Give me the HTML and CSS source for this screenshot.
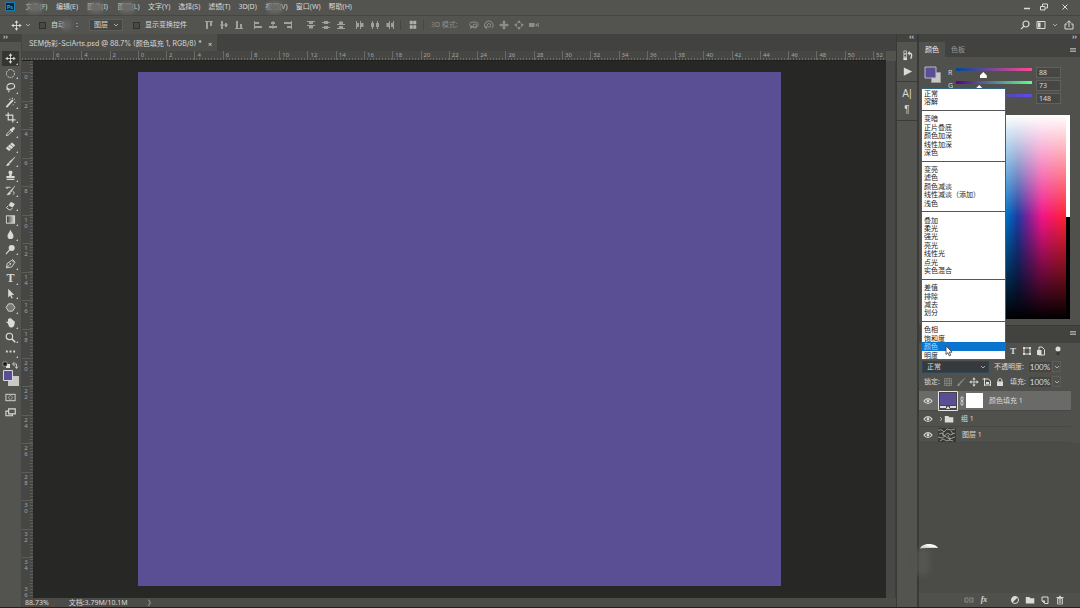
FILE: index.html
```html
<!DOCTYPE html>
<html lang="zh-CN">
<head>
<meta charset="utf-8">
<title>SEM伪彩-SciArts.psd</title>
<link rel="stylesheet" href="styles.css">
</head>
<body>
<svg class="defs" aria-hidden="true">
  <symbol id="move" viewBox="0 0 12 12"><path d="M6 2v8M2 6h8" stroke="currentColor" fill="none"/><path d="M6 .3 8 3H4zM6 11.7 8 9H4zM.3 6 3 4v4zM11.7 6 9 4v4z" fill="currentColor"/></symbol>
  <symbol id="marquee" viewBox="0 0 12 12"><circle cx="6" cy="6" r="4.4" fill="none" stroke="currentColor" stroke-dasharray="2 .9"/></symbol>
  <symbol id="lasso" viewBox="0 0 12 12"><ellipse cx="6.3" cy="4.8" rx="4.3" ry="3" fill="none" stroke="currentColor" stroke-width="1.2" transform="rotate(-12 6 5)"/><path d="M3 6.5c-1.7 1-.9 2.2.4 1.7 1.300-.7 1.500 1.500.3 3" fill="none" stroke="currentColor" stroke-width="1.100"/></symbol>
  <symbol id="wand" viewBox="0 0 12 12"><path d="M1.500 11 7.500 4.500" stroke="currentColor" stroke-width="2"/><path d="M4.500 2.500h1.500M8 .8v1.700M10.800 2 9.500 3.200M10 5.800h1.500M9 8v1" stroke="currentColor"/><path d="m7 5 1.500-1.600" stroke="currentColor" stroke-width="2"/></symbol>
  <symbol id="crop" viewBox="0 0 12 12"><path d="M3.500 .5v8h8M.5 3.500h8v8" fill="none" stroke="currentColor" stroke-width="1.300"/></symbol>
  <symbol id="dropper" viewBox="0 0 12 12"><path d="M1.500 10.500 2 8.500l4-4 1.500 1.500-4 4z" fill="none" stroke="currentColor"/><path d="m5.200 3.800 3 3 .8-.9-.5-.7 2-1.900c1-1.200-.7-3-2-2l-1.900 2-.6-.4z" fill="currentColor"/></symbol>
  <symbol id="heal" viewBox="0 0 12 12"><path d="M.8 8 7.500 1.500l3.700 3L4.500 11z" fill="currentColor"/><path d="m3 6 3.600 3M5.500 3.600l3.600 3" stroke="#535350" stroke-width=".7"/></symbol>
  <symbol id="brush" viewBox="0 0 12 12"><path d="M11 1 5.500 8 4.200 6.900z" fill="currentColor" stroke="currentColor" stroke-width=".5"/><path d="M3.800 7.300 5.300 8.700C4.500 10.500 3 11 1 10.800c1.300-.8 1-2.800 2.800-3.500z" fill="currentColor"/></symbol>
  <symbol id="stamp" viewBox="0 0 12 12"><path d="M6 .8c2.800 0 2.500 2.300 1.400 3.700-.5.900-.1 1.700.3 2H10.500v2.200h-9V6.500h2.800c.4-.3.800-1.100.3-2C3.500 3.100 3.200.8 6 .8zM1.800 9.600h8.400v1.300H1.800z" fill="currentColor"/></symbol>
  <symbol id="histbrush" viewBox="0 0 12 12"><path d="M10.800 1 6.600 8 5.300 7zM5 7.500 6.300 8.700C5.500 10.600 4 11 2 10.800c1.300-.8 1-2.600 3-3.300z" fill="currentColor" stroke="currentColor" stroke-width=".4"/><path d="M1 2.500h5M1 2.500 3 4.500M8.500 7c1.500.3 2 2 .4 3.500" fill="none" stroke="currentColor"/></symbol>
  <symbol id="eraser" viewBox="0 0 12 12"><path d="m6.500 2 4.300 2.300-2.500 4-4.500-2.300z" fill="currentColor"/><path d="m3.300 6.500-1.800 2 3.200 2.200h1.800l1.500-2" fill="none" stroke="currentColor"/></symbol>
  <symbol id="gradient" viewBox="0 0 12 12"><linearGradient id="gg"><stop stop-color="#333"/><stop offset="1" stop-color="#ddd"/></linearGradient><rect x="1.500" y="2" width="9" height="8" fill="url(#gg)" stroke="currentColor"/></symbol>
  <symbol id="drop" viewBox="0 0 12 12"><path d="M6 .8C7 3.500 9.300 5.500 9.300 7.800c0 4.300-6.600 4.300-6.600 0C2.700 5.500 5 3.500 6 .8z" fill="currentColor"/></symbol>
  <symbol id="dodge" viewBox="0 0 12 12"><circle cx="7.300" cy="4.300" r="3.300" fill="currentColor"/><path d="m5 6.500-4 4.500" stroke="currentColor" stroke-width="1.200"/></symbol>
  <symbol id="pen" viewBox="0 0 12 12"><path d="m1.500 10.800 1-5L7.500 2.500l2.800 2.800-3 4.500z" fill="none" stroke="currentColor"/><path d="m1.500 10.800 3.500-3.500M7.800 1.200l3.500 3.500" stroke="currentColor"/><circle cx="5.800" cy="6.400" r="1" fill="currentColor"/></symbol>
  <symbol id="pointer" viewBox="0 0 12 12"><path d="M3.500 .8v9.500l2.200-2.100 1.500 3.200 1.300-.6L7 7.700h3z" fill="currentColor"/></symbol>
  <symbol id="shape" viewBox="0 0 12 12"><path d="M3.800 2h4.400l2.600 4-2.600 4H3.800L1.200 6z" fill="#777" stroke="currentColor"/></symbol>
  <symbol id="hand" viewBox="0 0 12 12"><path d="M3.200 7 1 5.500c.4-1 1.400-.7 2.200.3V2.500c.2-.8 1.200-.8 1.400 0V1.300c.3-.8 1.300-.8 1.500 0v1c.3-.9 1.500-.8 1.600 0v1.200c.4-.8 1.400-.6 1.500.2v.9c.6-.5 1.500-.2 1.500.5 0 3-.8 6.300-4 6.300C4.500 11.400 4 9.500 3.200 7z" fill="currentColor"/></symbol>
  <symbol id="zoom" viewBox="0 0 12 12"><circle cx="4.800" cy="4.800" r="3.500" fill="none" stroke="currentColor" stroke-width="1.200"/><path d="m7.500 7.500 3.700 3.700" stroke="currentColor" stroke-width="1.700"/></symbol>
  <symbol id="dots" viewBox="0 0 12 12"><path d="M1 5h2v2H1zM5 5h2v2H5zM9 5h2v2H9z" fill="currentColor"/></symbol>
  <symbol id="mask" viewBox="0 0 12 12"><rect x="1" y="2.500" width="10" height="7" fill="none" stroke="currentColor"/><circle cx="6" cy="6" r="2" fill="none" stroke="currentColor" stroke-dasharray="1 .6"/></symbol>
  <symbol id="screens" viewBox="0 0 12 12"><path d="M4 2h7.200v5.500H4z" fill="none" stroke="currentColor" stroke-width="1.200"/><path d="M4 4.500H1v5h7v-2" fill="none" stroke="currentColor" stroke-width="1.200"/></symbol>
  <symbol id="chev" viewBox="0 0 6 6"><path d="m1 2 2 2 2-2" fill="none" stroke="currentColor" stroke-width=".9"/></symbol>
  <symbol id="a-top" viewBox="0 0 10 10"><path d="M1 1.500h8" stroke="currentColor"/><path d="M2 2h2v7H2zM6 2h2v4H6z" fill="currentColor"/></symbol>
  <symbol id="a-mid" viewBox="0 0 10 10"><path d="M1 5h8" stroke="currentColor"/><path d="M2 1h2v8H2zM6 3h2v4H6z" fill="currentColor"/></symbol>
  <symbol id="d-top" viewBox="0 0 10 10"><path d="M1 1.500h8M1 5.500h8" stroke="currentColor"/><path d="M3 2h4v2H3zM3 6h4v2.500H3z" fill="currentColor"/></symbol>
  <symbol id="d-mid" viewBox="0 0 10 10"><path d="M1 2.500h8M1 7.500h8" stroke="currentColor"/><path d="M3 1h4v3H3zM3 6h4v3H3z" fill="currentColor"/></symbol>
  <symbol id="arrange" viewBox="0 0 10 10"><path d="M2 1h2.500v3H2zM5.500 1H8v3H5.500zM2 5.500h2.500v3H2zM5.500 5.500H8v3H5.500z" fill="currentColor" stroke="currentColor" stroke-width=".5"/></symbol>
  <symbol id="orbit" viewBox="0 0 10 10"><ellipse cx="5" cy="4.500" rx="4.300" ry="2.500" fill="none" stroke="currentColor"/><circle cx="6" cy="6" r="2" fill="none" stroke="currentColor"/><path d="m1 9 1-4 2 2.500z" fill="currentColor"/></symbol>
  <symbol id="roll" viewBox="0 0 10 10"><path d="M1.500 8A4.300 4.300 0 1 1 8 8.200" fill="none" stroke="currentColor"/><circle cx="5" cy="5.300" r="1.800" fill="none" stroke="currentColor"/><path d="M0 6.500h3v3z" fill="currentColor"/></symbol>
  <symbol id="pan" viewBox="0 0 10 10"><path d="m5 0 2 2.500H6V4h1.500V3L10 5 7.500 7V6H6v1.500h1L5 10 3 7.500h1V6H2.500v1L0 5l2.500-2v1H4V2.500H3z" fill="currentColor"/></symbol>
  <symbol id="slide" viewBox="0 0 10 10"><path d="m5 0 2 3H3zM5 10 3 7h4zM0 5l3-2v4zM10 5 7 7V3z" fill="currentColor"/></symbol>
  <symbol id="cam" viewBox="0 0 10 10"><path d="M0 3h5.500v4H0zM6 5l2.500-2v4z" fill="currentColor"/><path d="M9.500 3v4" stroke="currentColor" stroke-width=".7"/></symbol>
  <symbol id="menu" viewBox="0 0 6 6"><path d="M0 1.500h6M0 3h6M0 4.500h6" stroke="currentColor" stroke-width=".8"/></symbol>
  <symbol id="eye" viewBox="0 0 10 10"><path d="M1 5c2-3.300 6-3.300 8 0-2 3.300-6 3.300-8 0z" fill="none" stroke="currentColor" stroke-width="1.200"/><circle cx="5" cy="5" r="1.400" fill="currentColor"/></symbol>
  <symbol id="folder" viewBox="0 0 10 10"><path d="M.8 2h3.500l1 1.200h4V8.500H.8z" fill="currentColor"/></symbol>
  <symbol id="frame" viewBox="0 0 10 10"><rect x="2" y="2" width="6" height="6" fill="none" stroke="currentColor"/><path d="M1 1h2v2H1zM7 1h2v2H7zM1 7h2v2H1zM7 7h2v2H7z" fill="currentColor"/></symbol>
  <symbol id="smart" viewBox="0 0 10 10"><path d="M3 1h3l2.500 2.500V9H3z" fill="none" stroke="currentColor"/><path d="M1 4h4.500v5H1z" fill="currentColor"/></symbol>
  <symbol id="checker" viewBox="0 0 10 10"><path d="M1.500 1.500h7v7h-7zM4 1v8M6.500 1v8M1 4h8M1 6.500h8" fill="none" stroke="currentColor" stroke-width=".7"/></symbol>
  <symbol id="artboard" viewBox="0 0 10 10"><path d="M2.500 1v8M.5 2h6l2 2v5M2 8h7" fill="none" stroke="currentColor"/><path d="M4 5h3v2H4z" fill="currentColor"/></symbol>
  <symbol id="lock" viewBox="0 0 10 10"><path d="M2 4.500h6V9H2z" fill="currentColor"/><path d="M3.200 5V3c0-2 3.600-2 3.600 0v2" fill="none" stroke="currentColor"/></symbol>
  <symbol id="link" viewBox="0 0 10 10"><path d="M4.500 3H1v4h3.500M5.500 3H9v4H5.500M3 5h4" fill="none" stroke="currentColor"/></symbol>
  <symbol id="adjust" viewBox="0 0 10 10"><circle cx="5" cy="5" r="3.500" fill="none" stroke="currentColor"/><path d="M7.500 2.500a3.500 3.500 0 0 0-5 5z" fill="currentColor"/></symbol>
  <symbol id="newlayer" viewBox="0 0 10 10"><path d="M2 2h6v6.500H5L2 6z" fill="none" stroke="currentColor"/><path d="M2 5.500h3v3z" fill="currentColor"/></symbol>
  <symbol id="trash" viewBox="0 0 10 10"><path d="M1.500 2.500h7M4 1.300h2" stroke="currentColor"/><path d="M2.500 3.500h5V9h-5zM4.200 4v4M5.800 4v4" fill="none" stroke="currentColor" stroke-width=".8"/></symbol>
</svg>

<div class="app">
  <header class="menubar">
    <svg class="logo" viewBox="0 0 10 9"><rect x=".5" y=".5" width="9" height="8" fill="#06263c" stroke="#1a7db2"/><text x="5" y="6.500" class="logo-text">Ps</text></svg>
    <nav class="menus">
      <button class="smudged">文件(F)</button><button>编辑(E)</button><button class="smudged">图像(I)</button><button class="smudged">图层(L)</button><button>文字(Y)</button><button>选择(S)</button><button>滤镜(T)</button><button>3D(D)</button><button class="smudged">视图(V)</button><button>窗口(W)</button><button>帮助(H)</button>
    </nav>
    <div class="window-buttons">
      <button aria-label="最小化"><svg viewBox="0 0 10 10"><path d="M2 6.500h6" stroke="currentColor" stroke-width="1.500"/></svg></button>
      <button aria-label="还原"><svg viewBox="0 0 10 10"><path d="M1.500 4.500h4.500V8H1.500zM3.500 4V2h5v4H6.500" fill="none" stroke="currentColor"/></svg></button>
      <button class="close" aria-label="关闭"><svg viewBox="0 0 10 10"><path d="m2.500 2.500 5 5M7.500 2.500l-5 5" stroke="currentColor"/></svg></button>
    </div>
  </header>

  <div class="options">
    <svg class="opt-tool"><use href="#move"/></svg>
    <svg class="chev"><use href="#chev"/></svg>
    <label class="check auto"><input type="checkbox"><span>自动</span><i></i><span>:</span></label>
    <span class="drop"><select aria-label="自动选择"><option>图层</option></select><svg class="chev"><use href="#chev"/></svg></span>
    <label class="check"><input type="checkbox"><span>显示变换控件</span></label>
    <div class="groups">
      <div class="group"><svg><use href="#a-top"/></svg><svg><use href="#a-mid"/></svg><svg class="flip"><use href="#a-top"/></svg></div>
      <div class="group"><svg class="ccw"><use href="#a-top"/></svg><svg class="ccw"><use href="#a-mid"/></svg><svg class="cw"><use href="#a-top"/></svg></div>
      <div class="group wide"><svg><use href="#d-top"/></svg><svg><use href="#d-mid"/></svg><svg class="flip"><use href="#d-top"/></svg></div>
      <div class="group"><svg class="ccw"><use href="#d-top"/></svg><svg class="ccw"><use href="#d-mid"/></svg><svg class="cw"><use href="#d-top"/></svg></div>
    </div>
    <div class="arrange"><svg><use href="#arrange"/></svg></div>
    <div class="mode"><span>3D 模式:</span><svg><use href="#orbit"/></svg><svg><use href="#roll"/></svg><svg><use href="#pan"/></svg><svg><use href="#slide"/></svg><svg><use href="#cam"/></svg></div>
    <div class="opt-right">
      <svg viewBox="0 0 10 10"><circle cx="6" cy="4" r="3" fill="none" stroke="currentColor" stroke-width="1.200"/><path d="M4 6.200 1 9.200" stroke="currentColor" stroke-width="1.200"/></svg>
      <svg viewBox="0 0 10 10"><path d="M1 1.500h8v7H1z" fill="none" stroke="currentColor"/><path d="M2 2.500h2.500v5H2z" fill="currentColor"/></svg>
      <svg class="chev"><use href="#chev"/></svg>
      <svg viewBox="0 0 10 10"><path d="M3 4H1v5h8V4H7M5 7V1M3 2.800 5 .8l2 2" fill="none" stroke="currentColor"/></svg>
    </div>
  </div>

  <div class="workspace">
    <aside class="toolbar">
      <div class="collapse">››</div>
      <div class="tools">
        <button class="on" aria-label="移动"><svg><use href="#move"/></svg></button>
        <button aria-label="选框"><svg><use href="#marquee"/></svg></button>
        <button aria-label="套索"><svg><use href="#lasso"/></svg></button>
        <button aria-label="快速选择"><svg><use href="#wand"/></svg></button>
        <button aria-label="裁剪"><svg><use href="#crop"/></svg></button>
        <button aria-label="吸管"><svg><use href="#dropper"/></svg></button>
        <button aria-label="修复"><svg><use href="#heal"/></svg></button>
        <button aria-label="画笔"><svg><use href="#brush"/></svg></button>
        <button aria-label="图章"><svg><use href="#stamp"/></svg></button>
        <button aria-label="历史画笔"><svg><use href="#histbrush"/></svg></button>
        <button aria-label="橡皮擦"><svg><use href="#eraser"/></svg></button>
        <button aria-label="渐变"><svg><use href="#gradient"/></svg></button>
        <button aria-label="模糊"><svg><use href="#drop"/></svg></button>
        <button aria-label="减淡"><svg><use href="#dodge"/></svg></button>
        <button aria-label="钢笔"><svg><use href="#pen"/></svg></button>
        <button class="type">T</button>
        <button aria-label="路径选择"><svg><use href="#pointer"/></svg></button>
        <button aria-label="形状"><svg><use href="#shape"/></svg></button>
        <button aria-label="抓手"><svg><use href="#hand"/></svg></button>
        <button aria-label="缩放"><svg><use href="#zoom"/></svg></button>
        <button aria-label="更多"><svg><use href="#dots"/></svg></button>
      </div>
      <svg class="fgbg" viewBox="0 0 20 28"><path d="M6 5h4v4H6z" fill="#ddd"/><path d="M3 3h4v4H3z" fill="#111" stroke="#bbb" stroke-width=".6"/><path d="M13 5h3.500v4M14.500 3 12.500 5l2 2M15 7.500l1.500 2 1.500-2" fill="none" stroke="#ddd" stroke-width=".8"/><path d="M8 17h11v10H8z" fill="#c9c9c4"/><path d="M3.500 11.500h9v10h-9z" fill="#5a4e94" stroke="#d6d6df"/></svg>
      <button class="mode-button" aria-label="快速蒙版"><svg><use href="#mask"/></svg></button>
      <button class="mode-button" aria-label="屏幕模式"><svg><use href="#screens"/></svg></button>
    </aside>

    <main class="document">
      <div class="tabs"><div class="tab"><span>SEM伪彩-SciArts.psd @ 88.7% (颜色填充 1, RGB/8) *</span><button aria-label="关闭文档">×</button></div></div>
      <div class="ruler-h"><span>6</span><span>4</span><span>2</span><span>0</span><span>2</span><span>4</span><span>6</span><span>8</span><span>10</span><span>12</span><span>14</span><span>16</span><span>18</span><span>20</span><span>22</span><span>24</span><span>26</span><span>28</span><span>30</span><span>32</span><span>34</span><span>36</span><span>38</span><span>40</span><span>42</span><span>44</span><span>46</span><span>48</span><span>50</span><span>52</span></div>
      <div class="view">
        <div class="ruler-v"><span>0</span><span>2</span><span>4</span><span>6</span><span>8</span><span>1<br>0</span><span>1<br>2</span><span>1<br>4</span><span>1<br>6</span><span>1<br>8</span><span>2<br>0</span><span>2<br>2</span><span>2<br>4</span><span>2<br>6</span><span>2<br>8</span><span>3<br>0</span><span>3<br>2</span><span>3<br>4</span><span>3<br>6</span></div>
        <div class="pasteboard"><div class="canvas"></div></div>
        <div class="scroll"></div>
      </div>
      <footer class="status"><span>88.73%</span><span>文档:3.79M/10.1M</span><span>〉</span></footer>
    </main>

    <aside class="dock">
      <div class="collapse">‹‹</div>
      <div class="dock-icons">
        <button aria-label="历史记录"><svg viewBox="0 0 12 12"><path d="M2 1h3v3H2zM2 4.500h3v3H2z" fill="none" stroke="currentColor" stroke-width=".8"/><path d="M1.500 8h4v3h-4z" fill="currentColor"/><path d="M7.500 3.500h1c2.500 0 2.500 3 1 6" fill="none" stroke="currentColor" stroke-width="1.500"/><path d="M6 3.500 8.500 1v5z" fill="currentColor"/></svg></button>
        <button aria-label="动作"><svg viewBox="0 0 12 12"><path d="M2 1.500 11 6l-9 4.500z" fill="currentColor"/></svg></button>
      </div>
      <div class="dock-icons second"><button>A|</button><button>¶</button></div>
    </aside>

    <aside class="panels">
      <div class="collapse right">››</div>
      <div class="panel-tabs"><button class="on">颜色</button><button>色板</button><svg class="burger"><use href="#menu"/></svg></div>
      <section class="color-panel">
        <div class="color-top">
          <svg class="swatches" viewBox="0 0 18 18"><path d="M7.500 6.500h9v10h-9z" fill="#c9c9c4" stroke="#999"/><path d="M1 1h11v11H1z" fill="#5a4e94" stroke="#b9b9cf"/></svg>
          <div class="channels">
            <label for="r">R</label><input class="red" id="r" type="range" max="255" value="88"><input class="num" aria-label="R 值" value="88">
            <label for="g">G</label><input class="green" id="g" type="range" max="255" value="73"><input class="num" aria-label="G 值" value="73">
            <label for="b">B</label><input class="blue" id="b" type="range" max="255" value="148"><input class="num" aria-label="B 值" value="148">
          </div>
        </div>
        <div class="spectrum"><div class="hues"></div><div class="bw"></div></div>
      </section>

      <section class="layers-panel">
        <div class="panel-tabs tall"><svg class="burger"><use href="#menu"/></svg></div>
        <div class="row filter"><button class="type">T</button><svg><use href="#frame"/></svg><svg><use href="#smart"/></svg><svg class="toggle" viewBox="0 0 10 10"><path d="M3.500 3h3v6h-3z" fill="#3a3a38"/><circle cx="5" cy="3" r="2.500" fill="currentColor"/></svg></div>
        <div class="row blend">
          <span class="drop"><select aria-label="混合模式"><option>正常</option></select><svg class="chev"><use href="#chev"/></svg></span>
          <label for="opacity">不透明度:</label><input class="num" id="opacity" value="100%"><button class="step" aria-label="不透明度滑块"><svg class="chev"><use href="#chev"/></svg></button>
          <ul class="modes" role="listbox" aria-label="混合模式">
            <li>正常</li><li>溶解</li><li class="sep"></li>
            <li>变暗</li><li>正片叠底</li><li>颜色加深</li><li>线性加深</li><li>深色</li><li class="sep"></li>
            <li>变亮</li><li>滤色</li><li>颜色减淡</li><li>线性减淡（添加）</li><li>浅色</li><li class="sep"></li>
            <li>叠加</li><li>柔光</li><li>强光</li><li>亮光</li><li>线性光</li><li>点光</li><li>实色混合</li><li class="sep"></li>
            <li>差值</li><li>排除</li><li>减去</li><li>划分</li><li class="sep"></li>
            <li>色相</li><li>饱和度</li><li class="on">颜色<svg class="cursor" viewBox="0 0 8 12"><path d="M1 .8v8.700l2-1.800 1.300 3.200 1.400-.6L4.400 7.200H7z" fill="#fff" stroke="#333" stroke-width=".8"/></svg></li><li>明度</li>
          </ul>
        </div>
        <div class="row locks">
          <span>锁定:</span>
          <div class="lock-icons"><svg class="dim"><use href="#checker"/></svg><svg class="dim"><use href="#brush"/></svg><svg><use href="#move"/></svg><svg><use href="#artboard"/></svg><svg><use href="#lock"/></svg></div>
          <label for="fill">填充:</label><input class="num" id="fill" value="100%"><button class="step" aria-label="填充滑块"><svg class="chev"><use href="#chev"/></svg></button>
        </div>
        <div class="layers">
          <div class="layer big on"><svg class="eye"><use href="#eye"/></svg>
            <svg class="thumb-fill" viewBox="0 0 20 20"><path d="M.5 .5h19v19H.5z" fill="#444" stroke="#e4e4e4"/><path d="M2 2h16v12H2z" fill="#5a4e94"/><path d="M2 16h6M12 16h6" stroke="#ddd" stroke-width="2"/><path d="M10 15l2 3H8z" fill="#ddd"/></svg>
            <svg class="chain" viewBox="0 0 4 10"><path d="M1 1h2v3.500H1zM1 5.500h2V9H1z" fill="none" stroke="currentColor" stroke-width=".8"/></svg>
            <div class="mask"></div><span>颜色填充 1</span></div>
          <div class="layer"><svg class="eye"><use href="#eye"/></svg><svg class="chev side"><use href="#chev"/></svg><svg class="folder"><use href="#folder"/></svg><span>组 1</span></div>
          <div class="layer"><svg class="eye"><use href="#eye"/></svg>
            <svg class="thumb-image" viewBox="0 0 18 14"><path fill="#383836" d="M0 0h18v14H0z"/><path d="M0 2h4l2 2 3-3 4 1 4-1M1 6l3-1 2 3 4-3 2 2 5-2M0 9l4 1 3-2 4 3 6-2M2 13l3-2 4 2 3-1 3 1M13 3l2 3M5 4v4M10 7l2 5" fill="none" stroke="#b4b4b0" stroke-width=".8"/></svg>
            <span>图层 1</span></div>
        </div>
        <div class="empty"><svg class="watermark" viewBox="0 0 18 6"><path d="M0 5.500C2-.5 15-.5 18 5 12 4.500 6 5 0 5.500z" fill="#fff"/></svg><i class="watermark-shade"></i></div>
        <div class="layer-actions"><button class="dim" aria-label="链接"><svg><use href="#link"/></svg></button><button class="fx">fx</button><button class="gap" aria-label="调整"><svg><use href="#adjust"/></svg></button><button aria-label="新建组"><svg><use href="#folder"/></svg></button><button aria-label="新建图层"><svg><use href="#newlayer"/></svg></button><button aria-label="删除"><svg><use href="#trash"/></svg></button></div>
      </section>
    </aside>
  </div>
</div>
</body>
</html>
```
FILE: styles.css
```css
:root {
  --bar: #535350;
  --panel: #50504d;
  --dark: #424240;
  --line: #3b3b39;
  --text: #dadad8;
  --dim: #8d8d8a;
  --purple: #5a4e94;
}
* { box-sizing: border-box; }
body {
  margin: 0;
  background: var(--bar);
  color: var(--text);
  font: 7px/10px "Noto Sans", "Noto Sans CJK SC", sans-serif;
}
button, input, select {
  margin: 0;
  padding: 0;
  border: 0;
  background: none;
  color: inherit;
  font: inherit;
  appearance: none;
}
button { display: grid; place-items: center; white-space: nowrap; }
svg { display: block; flex: none; width: 10px; height: 10px; }
.defs { position: absolute; width: 0; height: 0; }
.chev { width: 6px; height: 6px; color: #b5b5b2; }
.app { display: flex; flex-direction: column; height: 100vh; min-height: 600px; overflow: hidden; border-bottom: 1px solid #20201f; }

/* Menu bar */
.menubar { display: flex; align-items: center; height: 15px; padding: 0 10px 2px 5px; }
.logo { height: 9px; }
.logo-text { font: bold 5px "Liberation Sans", sans-serif; fill: #35aee8; text-anchor: middle; }
.menus { display: flex; gap: 8px; margin-left: 10px; }
.smudged { position: relative; min-width: 23px; }
.smudged::after { content: ""; position: absolute; left: 3px; right: 6px; top: 0; height: 11px; border-radius: 4px; background: #696967; filter: blur(2px); }
.window-buttons { display: flex; gap: 7px; margin-left: auto; }
.window-buttons .close { margin-left: 4px; }

/* Options bar */
.options { display: flex; align-items: center; height: 19px; padding: 0 6px 0 11px; border-top: 1px solid #454543; }
.opt-tool { width: 11px; height: 11px; margin-right: 3px; }
.check { display: flex; align-items: center; gap: 5px; margin-left: 11px; white-space: nowrap; }
.check input { width: 7px; height: 7px; border: 1px solid #30302f; background: #484846; }
.options > .chev + .check { margin-left: 8px; }
.options > .drop + .check { gap: 5px; margin-left: 10px; }
.auto i { width: 9px; height: 10px; margin-left: -8px; background: #656563; filter: blur(2px); }
.drop { display: flex; align-items: center; width: 34px; height: 12px; padding-right: 3px; border: 1px solid #5e5e5b; background: #464644; }
.drop select { flex: 1; min-width: 0; padding-left: 4px; }
.options > .drop { margin-left: 11px; }
.groups { display: flex; gap: 9px; margin-left: 17px; color: #a0a09d; }
.group, .mode { display: flex; align-items: center; gap: 5px; }
.group.wide { margin-left: 4px; }
.flip { transform: scaleY(-1); }
.ccw { transform: rotate(-90deg); }
.cw { transform: rotate(90deg); }
.arrange { margin-left: 5px; padding: 0 5px 0 7px; border: solid #464644; border-width: 0 1px; color: #b0b0ad; }
.mode { margin-left: 7px; color: var(--dim); white-space: nowrap; }
.mode span { margin-right: 6px; }
.opt-right { display: flex; align-items: center; gap: 6px; margin-left: auto; }

/* Workspace columns */
.workspace { display: grid; grid-template-columns: 22px minmax(0, 1fr) 23px 161px; flex: 1; min-height: 0; }
.collapse { height: 8px; padding-left: 3px; background: var(--dark); color: #c4c4c2; font: bold 7px/6px "Noto Sans", sans-serif; }
.toolbar { border-right: 1px solid #454543; }
.tools { display: flex; flex-direction: column; height: 308px; margin-top: 9px; }
.tools button { position: relative; flex: 1; }
.tools .on { margin: 0 2px; background: #353533; }
.tools svg, .mode-button svg { width: 11px; height: 11px; }
.tools button::after { content: ""; position: absolute; right: 3px; bottom: 1px; border: 1px solid; border-color: transparent #c8c8c6 #c8c8c6 transparent; }
.tools .on::after { right: 1px; }
.type { font: bold 12px/12px "Liberation Serif", serif; }
.fgbg { width: 20px; height: 28px; }
.mode-button { width: 21px; height: 15px; }
.fgbg + .mode-button { margin-top: 3px; }

/* Document window */
.document { display: flex; flex-direction: column; min-width: 0; }
.tabs { display: flex; height: 17px; background: var(--dark); }
.tab { display: flex; align-items: center; gap: 6px; padding: 2px 5px 0 7px; background: #4e4e4b; font: 7px/10px Inter, "Noto Sans CJK SC", sans-serif; white-space: nowrap; }
.ruler-h, .ruler-v { display: grid; background: #464644; color: #a5a5a2; font: 6px/8px "Noto Sans", sans-serif; }
.ruler-h {
  grid-template-columns: repeat(29, minmax(0, 1fr)) 13px;
  height: 10px;
  margin-right: 10px;
  padding-left: 31px;
  overflow: hidden;
  border-bottom: 1px solid #20201f;
  background: linear-gradient(#464644 7px, transparent 7px), repeating-linear-gradient(90deg, #686865 0 1px, #464644 1px 3px);
}
.ruler-h span { padding-left: 2px; border-left: 1px solid #696966; }
.view { display: flex; flex: 1; min-height: 0; }
.ruler-v {
  grid-template-rows: repeat(18, minmax(0, 1fr)) 12px;
  width: 11px;
  padding-top: 11px;
  line-height: 6px;
  text-align: center;
  background: linear-gradient(90deg, #464644 8px, transparent 8px), repeating-linear-gradient(#5e5e5b 0 1px, #464644 1px 3px);
}
.ruler-v span { padding: 1px 3px 0 0; border-top: 1px solid #5c5c59; }
.ruler-v span:last-child { padding-top: 0; border-top: 0; }
.pasteboard { flex: 1; display: flex; padding: 11px 105px 12px; background: #272725; }
.canvas { flex: 1; background: var(--purple); }
.scroll { width: 10px; border-right: 1px solid #3d3d3b; background: #484846; }
.status { display: flex; gap: 20px; height: 9px; padding-left: 3px; background: #4b4b48; line-height: 9px; }

/* Collapsed dock */
.dock { border: solid #393937; border-width: 0 2px 0 1px; }
.dock .collapse { padding: 0 3px 0 0; text-align: right; }
.dock-icons { display: grid; grid-auto-rows: 16px; padding: 5px 0 2px; border-bottom: 1px solid var(--line); }
.dock-icons svg { width: 11px; height: 11px; }
.second { padding: 4px 0 2px; font: 10px/12px "Liberation Sans", sans-serif; }

/* Right panels */
.panels { display: flex; flex-direction: column; min-width: 0; background: var(--panel); }
.collapse.right { padding: 0 3px 0 0; text-align: right; }
.panel-tabs { display: flex; align-items: stretch; height: 15px; background: var(--dark); }
.panel-tabs button { padding: 0 6px; color: #999996; }
.panel-tabs .on { background: var(--panel); color: #eee; }
.burger { align-self: center; width: 6px; height: 6px; margin: 0 4px 0 auto; color: #bbb; }
.color-panel { padding: 9px 10px 6px 5px; }
.color-top { display: flex; gap: 6px; margin-bottom: 10px; }
.swatches { width: 18px; height: 18px; }
.channels { display: grid; grid-template-columns: 4px 1fr 25px; grid-auto-rows: 13px; column-gap: 4px; flex: 1; margin-right: 9px; }
.channels label { line-height: 14px; }
.channels .num { width: 25px; height: 11px; margin-top: 1px; padding-left: 2px; border: 1px solid #60605d; background: #464644; }
input[type="range"] { width: 100%; height: 12px; margin-top: 2px; }
input[type="range"]::-webkit-slider-runnable-track { height: 12px; background: linear-gradient(90deg, var(--from), var(--to)) 0 0 / 100% 3px no-repeat; }
input[type="range"]::-webkit-slider-thumb { width: 7px; height: 6px; margin-top: 4px; background: #fff; clip-path: polygon(50% 0, 100% 60%, 100% 100%, 0 100%, 0 60%); appearance: none; }
.red { --from: #004994; --to: #ff4994; }
.green { --from: #580094; --to: #58ff94; }
.blue { --from: #584900; --to: #5849ff; }
.spectrum { display: flex; height: 204px; }
.hues { flex: 1; background: linear-gradient(#fff, #fff0 50%, #0000 50%, #000), linear-gradient(90deg, #f00, #ff0, #0f0, #00b4dc, #0068c0 59%, #1d3aa0 66%, #7a2298 73%, #f01488 83%, #ff2030); }
.bw { width: 4px; background: linear-gradient(#fff 50%, #000 50%); }

/* Layers */
.layers-panel { display: flex; flex-direction: column; flex: 1; min-height: 0; }
.tall { height: 18px; padding-bottom: 3px; border-top: 1px solid var(--line); }
.row { display: flex; align-items: center; height: 15px; padding-right: 19px; white-space: nowrap; }
.filter { justify-content: flex-end; gap: 4px; height: 16px; padding-right: 17px; }
.filter .type { width: 10px; font-size: 9px; }
.filter .toggle { margin-left: 3px; }
.blend { position: relative; padding-left: 3px; }
.blend .drop { width: 67px; height: 12px; padding-right: 2px; border-color: #2c4659; background: #373a3c; }
.row .num { width: 22px; margin-left: 3px; background: #454543; font: 8px/10px Lato, sans-serif; text-align: center; }
.blend label { flex: 1; margin-left: 5px; font-size: 7px; }
.step { width: 9px; height: 11px; margin-left: 1px; border: 1px solid #5c5c59; }
.modes {
  position: absolute;
  z-index: 2;
  left: 2px;
  bottom: 14px;
  display: grid;
  grid-auto-rows: minmax(0, 1fr);
  width: 85px;
  height: 272px;
  margin: 0;
  padding: 0;
  border: 1px solid #316384;
  background: #fff;
  color: #1c1c1c;
  line-height: 10px;
  list-style: none;
}
.modes li { padding-left: 2px; }
.modes .sep { background: linear-gradient(#555, #555) 0 4px / 100% 1px no-repeat; }
.modes .on { position: relative; background: #0b74cf; color: #a9dcff; }
.cursor { position: absolute; z-index: 1; left: 23px; top: 3px; width: 8px; height: 12px; }
.locks { padding-left: 5px; }
.lock-icons { display: flex; gap: 3px; margin: 0 auto 0 3px; }
.dim { color: var(--dim); }
.layers { margin-top: 2px; padding-right: 9px; }
.layer { display: flex; align-items: center; height: 16px; padding-left: 4px; border-bottom: 1px solid #474745; }
.layer.big { height: 20px; }
.layer.on { background: #6a6a68; }
.eye { margin-right: 5px; }
.thumb-fill { width: 20px; height: 20px; margin-right: 2px; }
.chain { width: 4px; margin-right: 2px; }
.mask { width: 17px; height: 15px; margin-right: 6px; background: #fff; }
.side { transform: rotate(-90deg); }
.folder { margin: 0 7px 0 0; }
.thumb-image { width: 18px; height: 14px; margin-right: 6px; }
.empty { position: relative; flex: 1; background: #4b4b48; }
.watermark { position: absolute; left: 1px; bottom: 44px; width: 18px; height: 6px; }
.watermark-shade { position: absolute; left: -2px; bottom: 18px; width: 12px; height: 26px; background: #565653; filter: blur(3px); }
.layer-actions { display: flex; justify-content: flex-end; gap: 5px; height: 14px; padding-right: 15px; background: #50504d; }
.layer-actions .gap { margin-left: 16px; }
.fx { width: 10px; font: italic bold 8px/10px "Liberation Serif", serif; }
```
